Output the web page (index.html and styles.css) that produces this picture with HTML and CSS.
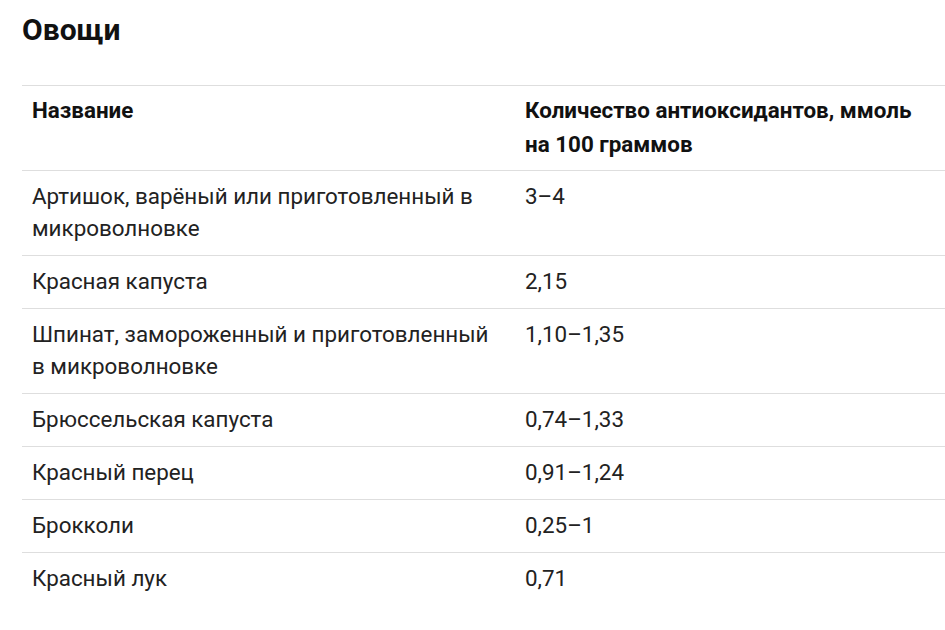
FILE: index.html
```html
<!DOCTYPE html>
<html lang="ru">
<head>
<meta charset="utf-8">
<title>Овощи</title>
<link rel="stylesheet" href="styles.css">
</head>
<body>
<div class="page">
  <h2 class="title">Овощи</h2>
  <table class="data">
    <colgroup><col class="c1"><col class="c2"></colgroup>
    <thead>
      <tr><th>Название</th><th>Количество антиоксидантов, ммоль на 100 граммов</th></tr>
    </thead>
    <tbody>
      <tr><td>Артишок, варёный или приготовленный в микроволновке</td><td>3–4</td></tr>
      <tr><td>Красная капуста</td><td>2,15</td></tr>
      <tr><td>Шпинат, замороженный и приготовленный в микроволновке</td><td>1,10–1,35</td></tr>
      <tr><td>Брюссельская капуста</td><td>0,74–1,33</td></tr>
      <tr><td>Красный перец</td><td>0,91–1,24</td></tr>
      <tr><td>Брокколи</td><td>0,25–1</td></tr>
      <tr><td>Красный лук</td><td>0,71</td></tr>
    </tbody>
  </table>
</div>
</body>
</html>
```
FILE: styles.css
```css
html, body { margin: 0; padding: 0; background: #fff; }
body { font-family: Roboto, "Liberation Sans", sans-serif; color: #222; }
.page { padding: 12px 0 0 22px; }
.title { margin: 0 0 37px; font-size: 30px; line-height: 36px; font-weight: 700; color: #111; }
.data { border-collapse: collapse; width: 923px; table-layout: fixed; }
.c1 { width: 493px; }
.data th, .data td { text-align: left; vertical-align: top; border-top: 1px solid #dedede; font-size: 22.4px; }
.data th { font-weight: 700; line-height: 34px; padding: 7px 10px 9px; color: #111; }
.data td { line-height: 32px; font-weight: 400; padding: 9px 10px 11px; }
```
